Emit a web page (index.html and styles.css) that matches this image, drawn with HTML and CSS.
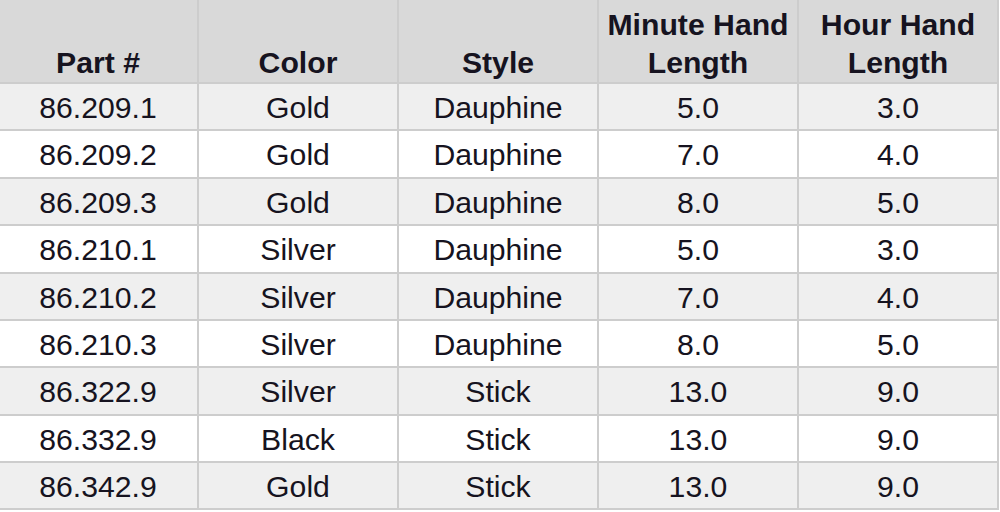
FILE: index.html
```html
<!DOCTYPE html>
<html lang="en">
<head>
<meta charset="utf-8">
<title>Watch Hands</title>
<link rel="stylesheet" href="styles.css">
</head>
<body>
<table class="parts">
  <thead>
    <tr>
      <th>Part #</th>
      <th>Color</th>
      <th>Style</th>
      <th>Minute Hand<br>Length</th>
      <th>Hour Hand<br>Length</th>
    </tr>
  </thead>
  <tbody>
    <tr><td>86.209.1</td><td>Gold</td><td>Dauphine</td><td>5.0</td><td>3.0</td></tr>
    <tr><td>86.209.2</td><td>Gold</td><td>Dauphine</td><td>7.0</td><td>4.0</td></tr>
    <tr><td>86.209.3</td><td>Gold</td><td>Dauphine</td><td>8.0</td><td>5.0</td></tr>
    <tr><td>86.210.1</td><td>Silver</td><td>Dauphine</td><td>5.0</td><td>3.0</td></tr>
    <tr><td>86.210.2</td><td>Silver</td><td>Dauphine</td><td>7.0</td><td>4.0</td></tr>
    <tr><td>86.210.3</td><td>Silver</td><td>Dauphine</td><td>8.0</td><td>5.0</td></tr>
    <tr><td>86.322.9</td><td>Silver</td><td>Stick</td><td>13.0</td><td>9.0</td></tr>
    <tr><td>86.332.9</td><td>Black</td><td>Stick</td><td>13.0</td><td>9.0</td></tr>
    <tr><td>86.342.9</td><td>Gold</td><td>Stick</td><td>13.0</td><td>9.0</td></tr>
  </tbody>
</table>
</body>
</html>
```
FILE: styles.css
```css
html, body {
  margin: 0;
  padding: 0;
  background: #ffffff;
  overflow: hidden;
}

.parts {
  border-collapse: separate;
  border-spacing: 0;
  table-layout: fixed;
  width: 1000px;
  margin-left: -1px;
  font-family: "Liberation Sans", Arial, sans-serif;
  font-size: 30.2px;
  color: #161320;
}

.parts th,
.parts td {
  width: 198px;
  padding: 0;
  text-align: center;
  border-right: 2px solid #cdcdcd;
  border-bottom: 2px solid #cdcdcd;
  white-space: nowrap;
}

.parts th {
  height: 82px;
  background: #d9d9d9;
  font-weight: bold;
  line-height: 38px;
  vertical-align: bottom;
}

.parts td {
  padding-top: 4px;
  padding-bottom: 1.375px;
  line-height: 40px;
  vertical-align: top;
}

.parts tbody tr:nth-child(odd) td {
  background: #efefef;
}

.parts tbody tr:nth-child(even) td {
  background: #ffffff;
}
```
